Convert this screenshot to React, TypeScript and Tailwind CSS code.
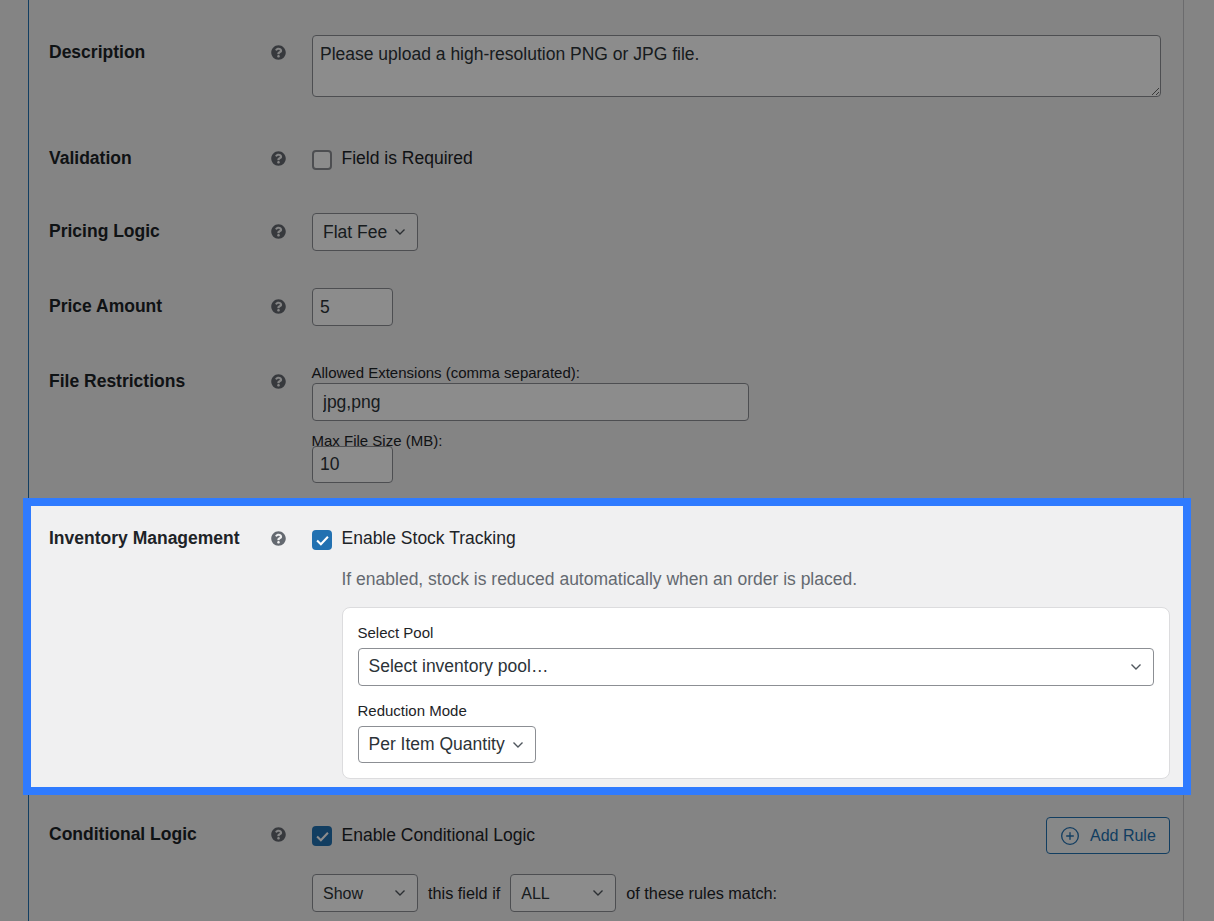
import { CirclePlus } from "lucide-react";
import type { ReactNode } from "react";
import { FaQuestionCircle } from "react-icons/fa";

function Chevron({ className = "" }: { className?: string }) {
  return (
    <svg viewBox="0 0 12 8" className={"h-[8px] w-[12px] shrink-0 " + className} fill="none" stroke="#50575e" strokeWidth="1.4">
      <path d="M1.5 1.5 6 6l4.5-4.5" />
    </svg>
  );
}

function Select({ label, className = "", textClass = "" }: { label: string; className?: string; textClass?: string }) {
  return (
    <div className={"flex items-center justify-between rounded-[4px] border border-[#8c8f94] text-[#2c3338] " + className}>
      <span className={textClass}>{label}</span>
      <Chevron />
    </div>
  );
}

function Check({ checked = false }: { checked?: boolean }) {
  if (!checked) return <div className="h-[20px] w-[20px] shrink-0 rounded-[4px] border-2 border-[#8c8f94] bg-white" />;
  return (
    <div className="flex h-[20px] w-[20px] shrink-0 items-center justify-center rounded-[4px] bg-[#2271b1]">
      <svg viewBox="0 0 12 10" className="h-[11px] w-[13px]" fill="none" stroke="white" strokeWidth="1.9">
        <path d="M1 5l3.5 3.5L11 1.5" />
      </svg>
    </div>
  );
}

function Row({ label, labelClass, className = "", children }: { label: string; labelClass: string; className?: string; children: ReactNode }) {
  return (
    <div className={"flex items-start pr-[13px] pl-[18px] " + className}>
      <div className={"flex w-[263px] shrink-0 items-center justify-between pr-[26px] " + labelClass}>
        <span className="text-[17.5px] leading-[20px] font-bold text-[#1d2327]">{label}</span>
        <FaQuestionCircle className="mt-[1px] h-[15px] w-[15px] text-[#646970]" />
      </div>
      <div className="min-w-0 flex-1">{children}</div>
    </div>
  );
}

export default function App() {
  return (
    <div className="relative h-[921px] w-[1214px] overflow-hidden bg-[#f0f0f1] font-['Liberation_Sans',sans-serif] text-[#1d2327]">
      {/* Settings panel */}
      <div className="ml-[28px] h-full w-[1156px] border-r border-l border-r-[#c3c4c7] border-l-[#2271b1] bg-[#f0f0f1]">
        <Row label="Description" labelClass="h-[34px]" className="ml-[2px] pt-[35px]">
          <textarea
            readOnly
            defaultValue="Please upload a high-resolution PNG or JPG file."
            className="block h-[62px] w-[849px] rounded-[4px] border border-[#8c8f94] bg-white px-[7px] py-[6px] text-[17.5px] leading-[24px] text-[#2c3338]"
          />
        </Row>

        <Row label="Validation" labelClass="h-[16px]" className="ml-[2px] mt-[53px]">
          <label className="flex h-[20px] items-center gap-[9.5px] text-[17.5px]">
            <Check />
            <span className="-mt-[3px]">Field is Required</span>
          </label>
        </Row>

        <Row label="Pricing Logic" labelClass="h-[36px]" className="ml-[2px] mt-[43px]">
          <Select label="Flat Fee" className="h-[38px] w-[106px] bg-white pr-[11px] pl-[10px] text-[17.5px]" />
        </Row>

        <Row label="Price Amount" labelClass="h-[36px]" className="ml-[2px] mt-[37px]">
          <input readOnly defaultValue="5" className="block h-[38px] w-[81px] rounded-[4px] border border-[#8c8f94] bg-white px-[7px] text-[17.5px] text-[#2c3338]" />
        </Row>

        <Row label="File Restrictions" labelClass="h-[34px]" className="ml-[2px] mt-[38px]">
          <div className="-ml-[0.5px] text-[15px] leading-[17px]">Allowed Extensions (comma separated):</div>
          <input readOnly defaultValue="jpg,png" className="mt-[2px] block h-[38px] w-[437px] rounded-[4px] border border-[#8c8f94] bg-white px-[10px] text-[17.5px] text-[#2c3338]" />
          <div className="mt-[11px] -ml-[0.5px] h-[14px] text-[15px] leading-[17px]">Max File Size (MB):</div>
          <input readOnly defaultValue="10" className="relative block h-[37px] w-[81px] rounded-[4px] border border-[#8c8f94] bg-white px-[7px] text-[17.5px] text-[#2c3338]" />
        </Row>

        {/* Highlighted step, sits above the dim layer */}
        <div className="relative z-10 mt-[23px] ml-[2px] h-[281px] bg-[#f0f0f1] pt-[24px] outline-8 outline-[#2f7bff]">
          <Row label="Inventory Management" labelClass="h-[16px]">
            <label className="flex h-[20px] items-center gap-[9.5px] text-[17.5px]">
              <Check checked />
              <span className="-mt-[3px]">Enable Stock Tracking</span>
            </label>
            <div className="mt-[19px] ml-[29.5px] text-[17.5px] leading-[20px] text-[#646970]">If enabled, stock is reduced automatically when an order is placed.</div>
            <div className="mt-[18px] ml-[30px] h-[172px] rounded-[8px] border border-[#dcdcde] bg-white px-[15px] pt-[16px]">
              <div className="-ml-[0.5px] text-[15px] leading-[17px] text-[#1d2327]">Select Pool</div>
              <Select label="Select inventory pool…" textClass="-mt-[2px]" className="mt-[7px] h-[38px] bg-white pr-[11px] pl-[9.5px] text-[17.5px]" />
              <div className="mt-[16px] -ml-[0.5px] text-[15px] leading-[17px] text-[#1d2327]">Reduction Mode</div>
              <Select label="Per Item Quantity" className="mt-[7px] h-[37px] w-[178px] bg-white pr-[11px] pl-[9.5px] text-[17.5px]" />
            </div>
          </Row>
        </div>

        <Row label="Conditional Logic" labelClass="h-[32px]" className="ml-[2px] mt-[31px]">
          <div className="flex items-start justify-between">
            <label className="mt-[8px] flex h-[20px] items-center gap-[9.5px] text-[17.5px]">
              <Check checked />
              <span className="-mt-[2px]">Enable Conditional Logic</span>
            </label>
            <button className="-mt-[1px] flex h-[37px] w-[124px] items-center gap-[10px] rounded-[4px] border border-[#2271b1] bg-[#f6f7f7] pl-[13px] text-[16px] text-[#2271b1]">
              <CirclePlus className="h-[20px] w-[20px]" strokeWidth={1.6} />
              Add Rule
            </button>
          </div>
          <div className="mt-[20px] flex items-center gap-[10px] text-[16.25px]">
            <Select label="Show" textClass="pt-[2px]" className="h-[38px] w-[106px] bg-white pr-[11px] pl-[10px] text-[16px]" />
            <span>this field if</span>
            <Select label="ALL" textClass="pt-[2px]" className="h-[38px] w-[106px] bg-white pr-[11px] pl-[10px] text-[16px]" />
            <span>of these rules match:</span>
          </div>
        </Row>
      </div>

      {/* Dim layer of the guided tour */}
      <div className="absolute inset-0 bg-black/45" />
    </div>
  );
}
